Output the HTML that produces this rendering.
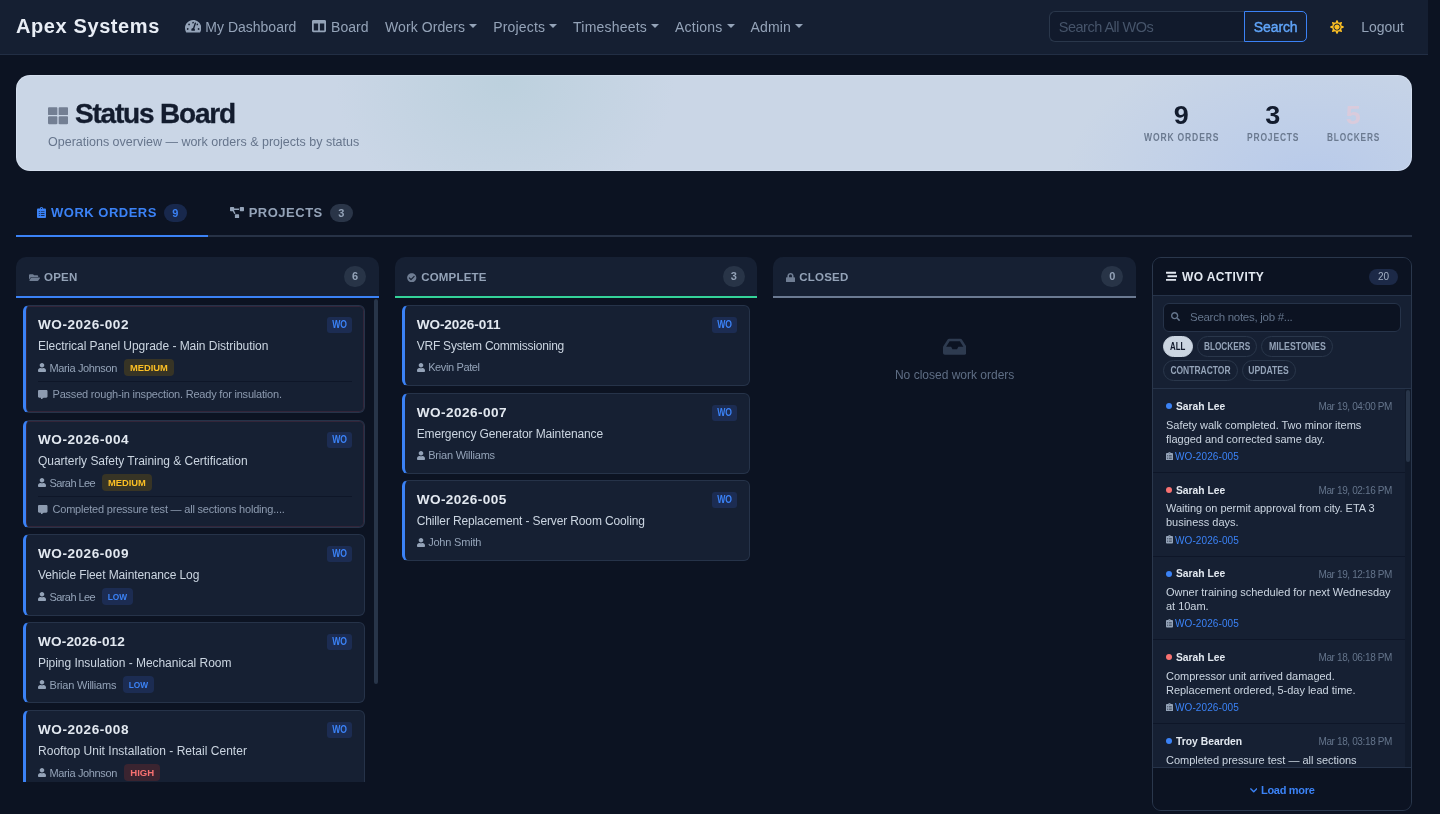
<!DOCTYPE html>
<html lang="en">
<head>
<meta charset="utf-8">
<title>Status Board - Apex Systems</title>
<style>
*{box-sizing:border-box;margin:0;padding:0}
html,body{width:1440px;height:814px;overflow:hidden;background:#0c1322}
body{font-family:"Liberation Sans",sans-serif;color:#cbd5e1;font-size:14px;line-height:1.5;position:relative}
a{color:inherit;text-decoration:none}
svg{display:block;flex:none}
.page{position:absolute;left:0;top:0;width:1428px;height:814px;overflow:hidden;will-change:transform}
/* NAV */
.nav{position:absolute;left:0;top:0;width:1428px;height:55px;background:#151f32;border-bottom:1px solid #222e44;display:flex;align-items:center;padding:0 16px}
.brand{font-weight:700;font-size:20px;letter-spacing:.6px;color:#e8edf5;margin-right:17.1px;line-height:30px;position:relative;top:-1px;white-space:nowrap}
.nl{display:flex;align-items:center;padding:0 8px;height:40px;color:#94a3b8;font-size:14px;white-space:nowrap}
.nl svg{margin-right:4px;margin-top:-2px}
.caret{display:inline-block;margin-left:4px;width:0;height:0;border-top:4px solid #94a3b8;border-left:4px solid transparent;border-right:4px solid transparent;position:relative;top:-1px}
.sp{flex:1}
.sform{display:flex;height:31px;margin-right:16px;margin-top:-1px}
.sin{width:195px;height:31px;background:#111a2c;border:1px solid #2a374b;border-right:0;border-radius:6px 0 0 6px;color:#46546a;font-size:14.5px;line-height:30px;overflow:hidden;white-space:nowrap;padding-left:8.6px;letter-spacing:-.5px}
.sbtn{width:63px;height:31px;border:1px solid #3b82f6;border-radius:0 5px 5px 0;color:#60a5fa;font-size:14px;font-weight:400;-webkit-text-stroke:.4px #60a5fa;line-height:30px;text-align:center;letter-spacing:-.1px}
.sun{padding:0 8px;position:relative;left:-1px;top:-.5px}
/* HERO */
.hero{position:absolute;left:16px;top:75px;width:1396px;height:96px;border-radius:14px;background:
 radial-gradient(ellipse 170px 135px at 35% 6%,rgba(180,205,216,.62),rgba(180,205,216,0) 100%),
 radial-gradient(ellipse 250px 150px at 93% 112%,rgba(184,202,234,1),rgba(184,202,234,0) 100%),
 #cad6e6;overflow:hidden;box-shadow:inset 0 0 0 1px rgba(235,242,252,.35)}
.hico{position:absolute;left:32px;top:30.8px;color:#737f93}
.htitle{position:absolute;left:59px;top:19.8px;font-size:28px;font-weight:700;letter-spacing:-1.2px;color:#131c2e;line-height:38px;white-space:nowrap;-webkit-text-stroke:.35px #131c2e}
.hsub{position:absolute;left:32px;top:58px;font-size:12.5px;color:#66758c;line-height:18px;white-space:nowrap}
.stats{position:absolute;left:0;top:0;height:96px;width:1396px}
.stat{position:absolute;top:0;text-align:center;padding-top:25.2px}
.stat b{display:block;font-size:25px;line-height:30px;font-weight:700;color:#131c2e;transform:scaleX(1.08)}
.stat b.blk{color:#dacbdc}
.stat span{display:block;font-size:10.3px;font-weight:700;letter-spacing:1px;color:#6b7a90;line-height:14px;margin-top:.7px;white-space:nowrap;transform-origin:0 50%;text-align:left}
/* TABS */
.tabs{position:absolute;left:16px;top:189px;width:1396px;height:48px;border-bottom:2px solid #273246;display:flex}
.tab{height:48px;padding:2px 21px 0;display:flex;align-items:center;font-size:13px;font-weight:700;letter-spacing:.5px;color:#94a3b8;border-bottom:2px solid transparent;white-space:nowrap}
.tab.on{color:#3b82f6;border-bottom-color:#3b82f6}
.tab svg{margin-right:5px;margin-top:-1.5px}
.tbadge{margin-left:7px;min-width:23px;height:18px;border-radius:9px;font-size:11px;line-height:18px;text-align:center;letter-spacing:0;background:#2a3548;color:#94a3b8;padding:0 6px}
.tab.on .tbadge{background:#18284c;color:#3b82f6}
/* BOARD */
.col{position:absolute;top:257px;width:362.67px;height:525px;overflow:hidden}
.c1{left:16px}.c2{left:394.67px}.c3{left:773.33px}
.ch{height:41px;background:#162033;border-radius:10px 10px 0 0;border-bottom:2px solid #3b82f6;display:flex;align-items:center;padding:0 12.6px 0 12px;font-size:11.5px;font-weight:700;letter-spacing:.2px;color:#94a3b8}
.c2 .ch{border-bottom-color:#34d399}
.c3 .ch{border-bottom-color:#6b7a92}
.ch svg{margin-right:5px;position:relative;top:1px;left:.5px;color:#6f7d93}.ch span.lb{position:relative;top:1px}
.ch .cnt{margin-left:auto;width:22px;height:21px;border-radius:11px;background:#283447;color:#94a3b8;text-align:center;line-height:21px;font-size:11px;letter-spacing:0}
.list{padding:7px 7px 0 7px}
.card{position:relative;background:#162033;border:1px solid #263349;border-left:3px solid #3b82f6;border-radius:6px;margin-bottom:7px;padding:0 12px;width:342px;height:81px}
.card.n{height:108px}
.c2 .card{width:348px}
.card.blk{box-shadow:inset 0 0 0 1px rgba(248,80,100,.13)}
.wo{font-size:13.6px;font-weight:700;color:#e2e8f0;line-height:20px;padding-top:9px;letter-spacing:.45px;white-space:nowrap}
.wob{position:absolute;right:12px;top:11px;width:25px;height:16px;border-radius:3px;background:#1c2c52;color:#3b82f6;font-size:10px;font-weight:700;line-height:16px;text-align:center}.wob i{display:inline-block;font-style:normal;transform:scaleX(.86)}
.ttl{font-size:12px;color:#cbd5e1;line-height:18px;margin-top:2px;white-space:nowrap}
.meta{display:flex;align-items:center;height:18px;margin-top:3.5px;font-size:11px;color:#94a3b8;white-space:nowrap}
.meta svg{margin-right:3.5px}.meta span.nmx{position:relative;top:1px}.c2 .meta span.nmx{top:0}
.pri{margin-left:7px;height:17px;line-height:17px;border-radius:4px;font-size:9.8px;font-weight:700;text-align:center}.pri i{display:inline-block;font-style:normal}
.pri.med{width:50px;background:#373425;color:#fbbf24}
.pri.low{width:31px;background:#1c2c52;color:#3b82f6}
.pri.high{width:36px;background:#3a2430;color:#f87171}
.note{border-top:1px solid #0e1628;margin-top:4.5px;height:26px;display:flex;align-items:center;font-size:11px;color:#8d9bb0;letter-spacing:-.2px;white-space:nowrap}
.note svg{margin-right:5px}
.sbar{position:absolute;border-radius:2px;background:#283549}
.empty{text-align:center;padding-top:38.3px;color:#5f6e85;font-size:12px}
.empty svg{margin:0 auto 8.4px;color:#2e3b50}
/* ACTIVITY */
.act{position:absolute;left:1152px;top:257px;width:260px;height:554px;border:1px solid #2a374c;border-radius:9px;overflow:hidden;background:#162033}
.ah{height:38px;background:#0c1322;border-bottom:1px solid #263349;display:flex;align-items:center;padding:0 13px 0 13px;font-size:12px;font-weight:700;letter-spacing:.35px;color:#e2e8f0}
.ah svg{margin-right:5px;margin-top:-1px;margin-left:-.4px}
.ah .n20{margin-left:auto;width:29px;height:16px;border-radius:8px;background:#1c2947;color:#a3b0c4;font-size:10px;line-height:16px;text-align:center;letter-spacing:0;font-weight:400}
.af{height:93px;border-bottom:1px solid #263349;padding:7px 10px 0 10px;position:relative}
.srch{height:29px;border:1px solid #263349;border-radius:6px;background:#0c1322;display:flex;align-items:center;padding-left:7px;color:#64748b;font-size:11.5px;letter-spacing:-.28px}
.srch svg{margin-right:10px;margin-top:-1.4px}
.chips{display:flex;flex-wrap:wrap;gap:3px 4px;margin-top:4px}
.chip{height:21px;border:1px solid #2a374b;border-radius:11px;font-size:9px;font-weight:700;line-height:19px;color:#94a3b8;text-align:center;font-size:10px}.chip i{display:inline-block;font-style:normal;position:relative;top:0}
.chip.on{background:#cbd5e1;border-color:#cbd5e1;color:#0f172a}
.feed{position:relative;height:378px;overflow:hidden;background:#111a2b}
.it{background:#162033;height:83.75px;border-bottom:1px solid #0e1628;padding:10.5px 13px 0 13px;width:252px;position:relative}
.ir{display:flex;align-items:center;height:14px}
.dot{width:6px;height:6px;border-radius:3px;background:#3b82f6;margin-right:4px;margin-top:-1px}
.dot.r{background:#f87171}
.nm{font-size:11.5px;font-weight:700;color:#e2e8f0;display:inline-block;transform:scaleX(.895);transform-origin:0 50%;white-space:nowrap}
.tm{margin-left:auto;font-size:10px;color:#64748b;letter-spacing:-.37px}
.tx{font-size:11px;line-height:14.2px;color:#cbd5e1;margin-top:4px;letter-spacing:-.02px;white-space:nowrap}
.lk{display:flex;align-items:center;margin-top:4px;height:13px;font-size:10px;color:#3b82f6;letter-spacing:.1px}
.lk svg{margin-right:2px;color:#94a3b8;margin-top:-1px}
.ft{position:absolute;left:0;bottom:0;width:258px;height:43px;background:#0c1322;border-top:1px solid #263349;display:flex;align-items:center;justify-content:center;padding-top:2px;font-size:11px;font-weight:700;color:#3b82f6;letter-spacing:-.31px}
.ft svg{margin-right:4px}
</style>
</head>
<body>
<div class="page">
<nav class="nav">
  <a class="brand">Apex Systems</a>
  <a class="nl"><svg width="16.3" height="14.5" viewBox="0 0 576 512" fill="currentColor" preserveAspectRatio="none"><path d="M288 32C128.94 32 0 160.94 0 320c0 52.8 14.25 102.26 39.06 144.8 5.61 9.62 16.3 15.2 27.44 15.2h443c11.14 0 21.83-5.58 27.44-15.2C561.75 422.26 576 372.8 576 320c0-159.06-128.94-288-288-288zm0 64c14.71 0 26.58 10.13 30.32 23.65-1.11 2.26-2.64 4.23-3.45 6.67l-9.22 27.67c-5.13 3.49-10.97 6.01-17.64 6.01-17.67 0-32-14.33-32-32S270.33 96 288 96zM96 384c-17.67 0-32-14.33-32-32s14.33-32 32-32 32 14.33 32 32-14.33 32-32 32zm48-160c-17.67 0-32-14.33-32-32s14.33-32 32-32 32 14.33 32 32-14.33 32-32 32zm246.77-72.41l-61.33 184C343.13 347.33 352 364.54 352 384c0 11.72-3.38 22.55-8.88 32H232.88c-5.5-9.45-8.88-20.28-8.88-32 0-33.94 26.5-61.43 59.9-63.59l61.34-184.01c4.17-12.56 17.73-19.45 30.36-15.17 12.57 4.19 19.35 17.79 15.17 30.36zm14.66 57.2l15.52-46.55c3.47-1.29 7.13-2.23 11.05-2.23 17.67 0 32 14.33 32 32s-14.33 32-32 32c-11.38-.01-20.89-6.28-26.57-15.22zM480 384c-17.67 0-32-14.33-32-32s14.33-32 32-32 32 14.33 32 32-14.33 32-32 32z"/></svg>My Dashboard</a>
  <a class="nl" style="padding-left:7.6px"><svg width="14" height="14" viewBox="0 0 512 512" fill="currentColor" preserveAspectRatio="none"><path d="M464 32H48C21.49 32 0 53.49 0 80v352c0 26.51 21.49 48 48 48h416c26.51 0 48-21.49 48-48V80c0-26.51-21.49-48-48-48zM224 416H64V160h160v256zm224 0H288V160h160v256z"/></svg><span style="margin-left:1.1px">Board</span></a>
  <a class="nl" style="letter-spacing:.08px;margin-left:.6px">Work Orders<i class="caret"></i></a>
  <a class="nl" style="letter-spacing:.15px;margin-left:.3px">Projects<i class="caret"></i></a>
  <a class="nl" style="letter-spacing:.21px">Timesheets<i class="caret"></i></a>
  <a class="nl" style="letter-spacing:.23px">Actions<i class="caret"></i></a>
  <a class="nl" style="letter-spacing:.12px">Admin<i class="caret"></i></a>
  <span class="sp"></span>
  <div class="sform"><div class="sin">Search All WOs</div><div class="sbtn">Search</div></div>
  <a class="sun"><svg width="14" height="14" viewBox="0 0 512 512" fill="#fbbf24" preserveAspectRatio="none"><path d="M256 160c-52.900 0-96 43.100-96 96s43.100 96 96 96 96-43.100 96-96-43.100-96-96-96zm246.400 80.500l-94.700-47.300 33.500-100.400c4.500-13.600-8.400-26.500-21.900-21.900l-100.400 33.500-47.400-94.800c-6.400-12.800-24.600-12.800-31 0l-47.300 94.700L92.700 70.800c-13.600-4.500-26.500 8.400-21.900 21.900l33.500 100.400-94.700 47.400c-12.800 6.400-12.800 24.600 0 31l94.700 47.300-33.500 100.500c-4.500 13.600 8.400 26.500 21.900 21.900l100.400-33.500 47.300 94.700c6.400 12.800 24.600 12.800 31 0l47.300-94.700 100.400 33.500c13.600 4.500 26.500-8.400 21.900-21.900l-33.500-100.400 94.700-47.300c13-6.500 13-24.700.2-31.100zm-155.900 106c-49.900 49.900-131.100 49.900-181 0-49.900-49.900-49.900-131.100 0-181 49.900-49.900 131.100-49.900 181 0 49.900 49.900 49.900 131.100 0 181z"/></svg></a>
  <a class="nl">Logout</a>
</nav>

<section class="hero">
  <div class="hico"><svg width="20" height="19.4" viewBox="0 0 512 512" fill="currentColor" preserveAspectRatio="none"><path d="M296 32h192c13.255 0 24 10.745 24 24v160c0 13.255-10.745 24-24 24H296c-13.255 0-24-10.745-24-24V56c0-13.255 10.745-24 24-24zm-80 0H24C10.745 32 0 42.745 0 56v160c0 13.255 10.745 24 24 24h192c13.255 0 24-10.745 24-24V56c0-13.255-10.745-24-24-24zM0 296v160c0 13.255 10.745 24 24 24h192c13.255 0 24-10.745 24-24V296c0-13.255-10.745-24-24-24H24c-13.255 0-24 10.745-24 24zm296 184h192c13.255 0 24-10.745 24-24V296c0-13.255-10.745-24-24-24H296c-13.255 0-24 10.745-24 24v160c0 13.255 10.745 24 24 24z"/></svg></div>
  <h1 class="htitle">Status Board</h1>
  <p class="hsub">Operations overview — work orders &amp; projects by status</p>
  <div class="stats">
    <div class="stat" style="left:1127.7px;width:74.4px"><b>9</b><span style="transform:scaleX(.831)">WORK ORDERS</span></div>
    <div class="stat" style="left:1231px;width:51.5px"><b>3</b><span style="transform:scaleX(.824)">PROJECTS</span></div>
    <div class="stat" style="left:1311px;width:52.3px"><b class="blk">5</b><span style="transform:scaleX(.806)">BLOCKERS</span></div>
  </div>
</section>

<div class="tabs">
  <a class="tab on"><svg width="9" height="11" viewBox="0 0 384 512" fill="currentColor" preserveAspectRatio="none"><path d="M336 64h-80c0-35.3-28.7-64-64-64s-64 28.7-64 64H48C21.5 64 0 85.5 0 112v352c0 26.5 21.5 48 48 48h288c26.5 0 48-21.5 48-48V112c0-26.5-21.5-48-48-48zM96 424c-13.3 0-24-10.7-24-24s10.700-24 24-24 24 10.700 24 24-10.700 24-24 24zm0-96c-13.300 0-24-10.700-24-24s10.700-24 24-24 24 10.700 24 24-10.700 24-24 24zm0-96c-13.300 0-24-10.700-24-24s10.700-24 24-24 24 10.700 24 24-10.700 24-24 24zm96-192c13.300 0 24 10.700 24 24s-10.700 24-24 24-24-10.700-24-24 10.700-24 24-24zm128 368c0 4.400-3.600 8-8 8H168c-4.400 0-8-3.600-8-8v-16c0-4.400 3.600-8 8-8h144c4.400 0 8 3.600 8 8v16zm0-96c0 4.400-3.600 8-8 8H168c-4.400 0-8-3.600-8-8v-16c0-4.400 3.600-8 8-8h144c4.400 0 8 3.600 8 8v16zm0-96c0 4.400-3.600 8-8 8H168c-4.400 0-8-3.600-8-8v-16c0-4.400 3.600-8 8-8h144c4.400 0 8 3.600 8 8v16z"/></svg>WORK ORDERS<span class="tbadge">9</span></a>
  <a class="tab" style="margin-left:.8px"><svg width="14" height="11.5" viewBox="0 0 640 512" fill="currentColor" preserveAspectRatio="none"><path d="M384 320H256c-17.670 0-32 14.330-32 32v128c0 17.670 14.330 32 32 32h128c17.670 0 32-14.330 32-32V352c0-17.670-14.330-32-32-32zM192 32c0-17.670-14.330-32-32-32H32C14.330 0 0 14.330 0 32v128c0 17.670 14.330 32 32 32h95.720l73.160 128.040C211.980 300.980 232.400 288 256 288h.280L192 175.510V128h224V64H192V32zM608 0H480c-17.670 0-32 14.330-32 32v128c0 17.670 14.330 32 32 32h128c17.670 0 32-14.330 32-32V32c0-17.670-14.330-32-32-32z"/></svg>PROJECTS<span class="tbadge">3</span></a>
</div>

<div class="col c1">
  <div class="ch"><svg width="11" height="9" viewBox="0 0 576 512" fill="currentColor" preserveAspectRatio="none"><path d="M572.694 292.093L500.270 416.248A63.997 63.997 0 0 1 444.989 448H45.025c-18.523 0-30.064-20.093-20.731-36.093l72.424-124.155A64 64 0 0 1 152 256h399.964c18.523 0 30.064 20.093 20.730 36.093zM152 224h328v-48c0-26.510-21.490-48-48-48H272l-64-64H48C21.490 64 0 85.490 0 112v278.046l69.077-118.418C86.214 242.250 117.989 224 152 224z"/></svg><span class="lb">OPEN</span><span class="cnt">6</span></div>
  <div class="list">
    <div class="card n blk"><div class="wo" style="letter-spacing:0.51px">WO-2026-002</div><span class="wob"><i>WO</i></span><div class="ttl" style="letter-spacing:-0.04px">Electrical Panel Upgrade - Main Distribution</div><div class="meta"><svg width="8" height="9" viewBox="0 0 448 512" fill="currentColor" preserveAspectRatio="none"><path d="M224 256c70.700 0 128-57.300 128-128S294.700 0 224 0 96 57.300 96 128s57.300 128 128 128zm89.600 32h-16.700c-22.200 10.200-46.900 16-72.900 16s-50.600-5.800-72.900-16h-16.700C60.200 288 0 348.200 0 422.400V464c0 26.500 21.500 48 48 48h352c26.500 0 48-21.500 48-48v-41.600c0-74.200-60.200-134.400-134.400-134.400z"/></svg><span class="nmx" style="letter-spacing:-0.36px">Maria Johnson</span><span class="pri med"><i style="transform:scaleX(.955)">MEDIUM</i></span></div><div class="note"><svg width="9.5" height="9.5" viewBox="0 0 512 512" fill="currentColor" preserveAspectRatio="none"><path d="M448 0H64C28.700 0 0 28.700 0 64v288c0 35.300 28.700 64 64 64h96v84c0 9.800 11.200 15.500 19.100 9.700L304 416h144c35.300 0 64-28.700 64-64V64c0-35.300-28.700-64-64-64z"/></svg>Passed rough-in inspection. Ready for insulation.</div></div>
    <div class="card n blk" style="margin-bottom:6px"><div class="wo" style="letter-spacing:0.53px">WO-2026-004</div><span class="wob"><i>WO</i></span><div class="ttl" style="letter-spacing:-0.03px">Quarterly Safety Training &amp; Certification</div><div class="meta"><svg width="8" height="9" viewBox="0 0 448 512" fill="currentColor" preserveAspectRatio="none"><path d="M224 256c70.700 0 128-57.300 128-128S294.700 0 224 0 96 57.300 96 128s57.300 128 128 128zm89.600 32h-16.700c-22.200 10.200-46.900 16-72.900 16s-50.600-5.800-72.900-16h-16.700C60.200 288 0 348.200 0 422.400V464c0 26.500 21.500 48 48 48h352c26.500 0 48-21.500 48-48v-41.600c0-74.200-60.200-134.400-134.400-134.400z"/></svg><span class="nmx" style="letter-spacing:-0.585px">Sarah Lee</span><span class="pri med"><i style="transform:scaleX(.955)">MEDIUM</i></span></div><div class="note"><svg width="9.5" height="9.5" viewBox="0 0 512 512" fill="currentColor" preserveAspectRatio="none"><path d="M448 0H64C28.700 0 0 28.700 0 64v288c0 35.300 28.700 64 64 64h96v84c0 9.800 11.200 15.500 19.100 9.700L304 416h144c35.300 0 64-28.700 64-64V64c0-35.300-28.700-64-64-64z"/></svg>Completed pressure test — all sections holding....</div></div>
    <div class="card" style="height:82px;margin-bottom:6px"><div class="wo" style="letter-spacing:0.51px">WO-2026-009</div><span class="wob"><i>WO</i></span><div class="ttl" style="letter-spacing:-0.1px">Vehicle Fleet Maintenance Log</div><div class="meta"><svg width="8" height="9" viewBox="0 0 448 512" fill="currentColor" preserveAspectRatio="none"><path d="M224 256c70.700 0 128-57.300 128-128S294.700 0 224 0 96 57.300 96 128s57.300 128 128 128zm89.600 32h-16.700c-22.200 10.200-46.900 16-72.900 16s-50.600-5.800-72.900-16h-16.700C60.200 288 0 348.200 0 422.400V464c0 26.500 21.500 48 48 48h352c26.500 0 48-21.500 48-48v-41.600c0-74.200-60.200-134.400-134.400-134.400z"/></svg><span class="nmx" style="letter-spacing:-0.585px">Sarah Lee</span><span class="pri low"><i style="transform:scaleX(.85)">LOW</i></span></div></div>
    <div class="card"><div class="wo" style="letter-spacing:0.15px">WO-2026-012</div><span class="wob"><i>WO</i></span><div class="ttl" style="letter-spacing:-0.04px">Piping Insulation - Mechanical Room</div><div class="meta"><svg width="8" height="9" viewBox="0 0 448 512" fill="currentColor" preserveAspectRatio="none"><path d="M224 256c70.700 0 128-57.300 128-128S294.700 0 224 0 96 57.300 96 128s57.300 128 128 128zm89.600 32h-16.700c-22.200 10.200-46.900 16-72.900 16s-50.600-5.800-72.900-16h-16.700C60.200 288 0 348.200 0 422.400V464c0 26.500 21.500 48 48 48h352c26.500 0 48-21.500 48-48v-41.600c0-74.200-60.200-134.400-134.400-134.400z"/></svg><span class="nmx" style="letter-spacing:-0.21px">Brian Williams</span><span class="pri low"><i style="transform:scaleX(.85)">LOW</i></span></div></div>
    <div class="card"><div class="wo" style="letter-spacing:0.51px">WO-2026-008</div><span class="wob"><i>WO</i></span><div class="ttl" style="letter-spacing:0.02px">Rooftop Unit Installation - Retail Center</div><div class="meta"><svg width="8" height="9" viewBox="0 0 448 512" fill="currentColor" preserveAspectRatio="none"><path d="M224 256c70.700 0 128-57.300 128-128S294.700 0 224 0 96 57.300 96 128s57.300 128 128 128zm89.600 32h-16.700c-22.200 10.200-46.900 16-72.900 16s-50.600-5.800-72.900-16h-16.700C60.200 288 0 348.200 0 422.400V464c0 26.500 21.500 48 48 48h352c26.500 0 48-21.500 48-48v-41.600c0-74.200-60.200-134.400-134.400-134.400z"/></svg><span class="nmx" style="letter-spacing:-0.36px">Maria Johnson</span><span class="pri high"><i style="transform:scaleX(.98)">HIGH</i></span></div></div>
  </div>
  <div class="sbar" style="left:358.4px;top:42.3px;width:3.3px;height:385px"></div>
</div>

<div class="col c2">
  <div class="ch"><svg width="9.5" height="9.5" viewBox="0 0 512 512" fill="currentColor" preserveAspectRatio="none"><path d="M504 256c0 136.967-111.033 248-248 248S8 392.967 8 256 119.033 8 256 8s248 111.033 248 248zM227.314 387.314l184-184c6.248-6.248 6.248-16.379 0-22.627l-22.627-22.627c-6.248-6.249-16.379-6.249-22.628 0L216 308.118l-70.059-70.059c-6.248-6.248-16.379-6.248-22.628 0l-22.627 22.627c-6.248 6.248-6.248 16.379 0 22.627l104 104c6.249 6.249 16.379 6.249 22.628.001z"/></svg><span class="lb">COMPLETE</span><span class="cnt">3</span></div>
  <div class="list">
    <div class="card"><div class="wo" style="letter-spacing:-0.08px">WO-2026-011</div><span class="wob"><i>WO</i></span><div class="ttl" style="letter-spacing:-0.22px">VRF System Commissioning</div><div class="meta"><svg width="8" height="9" viewBox="0 0 448 512" fill="currentColor" preserveAspectRatio="none"><path d="M224 256c70.700 0 128-57.300 128-128S294.700 0 224 0 96 57.300 96 128s57.300 128 128 128zm89.600 32h-16.700c-22.200 10.200-46.900 16-72.900 16s-50.600-5.800-72.900-16h-16.700C60.200 288 0 348.200 0 422.400V464c0 26.500 21.500 48 48 48h352c26.500 0 48-21.500 48-48v-41.600c0-74.200-60.200-134.400-134.400-134.400z"/></svg><span class="nmx" style="letter-spacing:-0.38px">Kevin Patel</span></div></div>
    <div class="card" style="margin-bottom:6px"><div class="wo" style="letter-spacing:0.46px">WO-2026-007</div><span class="wob"><i>WO</i></span><div class="ttl" style="letter-spacing:-0.12px">Emergency Generator Maintenance</div><div class="meta"><svg width="8" height="9" viewBox="0 0 448 512" fill="currentColor" preserveAspectRatio="none"><path d="M224 256c70.700 0 128-57.300 128-128S294.700 0 224 0 96 57.300 96 128s57.300 128 128 128zm89.600 32h-16.700c-22.200 10.200-46.900 16-72.900 16s-50.600-5.800-72.900-16h-16.700C60.200 288 0 348.200 0 422.400V464c0 26.500 21.500 48 48 48h352c26.500 0 48-21.500 48-48v-41.600c0-74.200-60.200-134.400-134.400-134.400z"/></svg><span class="nmx" style="letter-spacing:-0.21px">Brian Williams</span></div></div>
    <div class="card"><div class="wo" style="letter-spacing:0.42px">WO-2026-005</div><span class="wob"><i>WO</i></span><div class="ttl" style="letter-spacing:-0.13px">Chiller Replacement - Server Room Cooling</div><div class="meta"><svg width="8" height="9" viewBox="0 0 448 512" fill="currentColor" preserveAspectRatio="none"><path d="M224 256c70.700 0 128-57.300 128-128S294.700 0 224 0 96 57.300 96 128s57.300 128 128 128zm89.600 32h-16.700c-22.200 10.200-46.900 16-72.900 16s-50.600-5.800-72.900-16h-16.700C60.200 288 0 348.200 0 422.400V464c0 26.500 21.500 48 48 48h352c26.500 0 48-21.500 48-48v-41.600c0-74.200-60.200-134.400-134.400-134.400z"/></svg><span class="nmx" style="letter-spacing:-0.2px">John Smith</span></div></div>
  </div>
</div>

<div class="col c3">
  <div class="ch"><svg width="9" height="9.5" viewBox="0 0 448 512" fill="currentColor" preserveAspectRatio="none"><path d="M400 224h-24v-72C376 68.200 307.800 0 224 0S72 68.200 72 152v72H48c-26.500 0-48 21.500-48 48v192c0 26.500 21.500 48 48 48h352c26.500 0 48-21.500 48-48V272c0-26.500-21.500-48-48-48zm-104 0H152v-72c0-39.700 32.300-72 72-72s72 32.300 72 72v72z"/></svg><span class="lb">CLOSED</span><span class="cnt">0</span></div>
  <div class="empty"><svg width="23.5" height="21.3" viewBox="0 0 576 512" fill="currentColor" preserveAspectRatio="none"><path d="M567.938 243.908L462.250 85.374A48.003 48.003 0 0 0 422.311 64H153.689a48 48 0 0 0-39.938 21.374L8.062 243.908A47.994 47.994 0 0 0 0 270.533V400c0 26.510 21.490 48 48 48h480c26.510 0 48-21.490 48-48V270.533a47.994 47.994 0 0 0-8.062-26.625zM162.252 128h251.497l85.333 128H376l-32 64H232l-32-64H76.918l85.334-128z"/></svg>No closed work orders</div>
</div>

<aside class="act">
  <div class="ah"><svg width="11.5" height="10.5" viewBox="0 0 512 512" fill="currentColor" preserveAspectRatio="none"><path d="M16 128h416c8.840 0 16-7.160 16-16V48c0-8.840-7.160-16-16-16H16C7.160 32 0 39.160 0 48v64c0 8.840 7.160 16 16 16zm480 80H80c-8.840 0-16 7.160-16 16v64c0 8.840 7.160 16 16 16h416c8.840 0 16-7.160 16-16v-64c0-8.840-7.160-16-16-16zm-64 176H16c-8.840 0-16 7.160-16 16v64c0 8.840 7.160 16 16 16h416c8.840 0 16-7.160 16-16v-64c0-8.840-7.160-16-16-16z"/></svg>WO ACTIVITY<span class="n20">20</span></div>
  <div class="af">
    <div class="srch"><svg width="9" height="9" viewBox="0 0 512 512" fill="currentColor" preserveAspectRatio="none"><path d="M505 442.700L405.300 343c-4.500-4.500-10.600-7-17-7H372c27.600-35.300 44-79.700 44-128C416 93.100 322.900 0 208 0S0 93.100 0 208s93.100 208 208 208c48.300 0 92.700-16.400 128-44v16.300c0 6.400 2.500 12.500 7 17l99.700 99.700c9.400 9.400 24.600 9.400 33.900 0l28.300-28.300c9.400-9.400 9.400-24.600.1-34zM208 336c-70.700 0-128-57.200-128-128 0-70.700 57.200-128 128-128 70.700 0 128 57.200 128 128 0 70.700-57.200 128-128 128z"/></svg>Search notes, job #...</div>
    <div class="chips"><span class="chip on" style="width:30px"><i style="transform:scaleX(0.79)">ALL</i></span><span class="chip" style="width:60.4px"><i style="transform:scaleX(0.823)">BLOCKERS</i></span><span class="chip" style="width:71.2px"><i style="transform:scaleX(0.875)">MILESTONES</i></span><span class="chip" style="width:74.5px"><i style="transform:scaleX(0.848)">CONTRACTOR</i></span><span class="chip" style="width:54.6px"><i style="transform:scaleX(0.857)">UPDATES</i></span></div>
  </div>
  <div class="feed">
    <div class="it"><div class="ir"><i class="dot"></i><span class="nm">Sarah Lee</span><span class="tm">Mar 19, 04:00 PM</span></div><div class="tx">Safety walk completed. Two minor items<br>flagged and corrected same day.</div><a class="lk"><svg width="7" height="8.5" viewBox="0 0 384 512" fill="currentColor" preserveAspectRatio="none"><path d="M336 64h-80c0-35.3-28.7-64-64-64s-64 28.7-64 64H48C21.5 64 0 85.5 0 112v352c0 26.5 21.5 48 48 48h288c26.5 0 48-21.5 48-48V112c0-26.5-21.5-48-48-48zM96 424c-13.3 0-24-10.7-24-24s10.700-24 24-24 24 10.700 24 24-10.700 24-24 24zm0-96c-13.300 0-24-10.700-24-24s10.700-24 24-24 24 10.700 24 24-10.700 24-24 24zm0-96c-13.300 0-24-10.700-24-24s10.700-24 24-24 24 10.700 24 24-10.700 24-24 24zm96-192c13.300 0 24 10.700 24 24s-10.700 24-24 24-24-10.700-24-24 10.700-24 24-24zm128 368c0 4.400-3.600 8-8 8H168c-4.400 0-8-3.600-8-8v-16c0-4.400 3.600-8 8-8h144c4.400 0 8 3.600 8 8v16zm0-96c0 4.400-3.600 8-8 8H168c-4.400 0-8-3.600-8-8v-16c0-4.400 3.600-8 8-8h144c4.400 0 8 3.600 8 8v16zm0-96c0 4.400-3.600 8-8 8H168c-4.400 0-8-3.600-8-8v-16c0-4.400 3.600-8 8-8h144c4.400 0 8 3.600 8 8v16z"/></svg>WO-2026-005</a></div>
    <div class="it"><div class="ir"><i class="dot r"></i><span class="nm">Sarah Lee</span><span class="tm">Mar 19, 02:16 PM</span></div><div class="tx">Waiting on permit approval from city. ETA 3<br>business days.</div><a class="lk"><svg width="7" height="8.5" viewBox="0 0 384 512" fill="currentColor" preserveAspectRatio="none"><path d="M336 64h-80c0-35.3-28.7-64-64-64s-64 28.7-64 64H48C21.5 64 0 85.5 0 112v352c0 26.5 21.5 48 48 48h288c26.5 0 48-21.5 48-48V112c0-26.5-21.5-48-48-48zM96 424c-13.3 0-24-10.7-24-24s10.700-24 24-24 24 10.700 24 24-10.700 24-24 24zm0-96c-13.300 0-24-10.700-24-24s10.700-24 24-24 24 10.700 24 24-10.700 24-24 24zm0-96c-13.300 0-24-10.700-24-24s10.700-24 24-24 24 10.700 24 24-10.700 24-24 24zm96-192c13.300 0 24 10.700 24 24s-10.700 24-24 24-24-10.700-24-24 10.700-24 24-24zm128 368c0 4.400-3.600 8-8 8H168c-4.400 0-8-3.600-8-8v-16c0-4.400 3.600-8 8-8h144c4.400 0 8 3.600 8 8v16zm0-96c0 4.400-3.600 8-8 8H168c-4.400 0-8-3.600-8-8v-16c0-4.400 3.600-8 8-8h144c4.400 0 8 3.600 8 8v16zm0-96c0 4.400-3.600 8-8 8H168c-4.400 0-8-3.600-8-8v-16c0-4.400 3.600-8 8-8h144c4.400 0 8 3.600 8 8v16z"/></svg>WO-2026-005</a></div>
    <div class="it"><div class="ir"><i class="dot"></i><span class="nm">Sarah Lee</span><span class="tm">Mar 19, 12:18 PM</span></div><div class="tx">Owner training scheduled for next Wednesday<br>at 10am.</div><a class="lk"><svg width="7" height="8.5" viewBox="0 0 384 512" fill="currentColor" preserveAspectRatio="none"><path d="M336 64h-80c0-35.3-28.7-64-64-64s-64 28.7-64 64H48C21.5 64 0 85.5 0 112v352c0 26.5 21.5 48 48 48h288c26.5 0 48-21.5 48-48V112c0-26.5-21.5-48-48-48zM96 424c-13.3 0-24-10.7-24-24s10.700-24 24-24 24 10.700 24 24-10.700 24-24 24zm0-96c-13.300 0-24-10.700-24-24s10.700-24 24-24 24 10.700 24 24-10.700 24-24 24zm0-96c-13.300 0-24-10.700-24-24s10.700-24 24-24 24 10.700 24 24-10.700 24-24 24zm96-192c13.300 0 24 10.700 24 24s-10.700 24-24 24-24-10.700-24-24 10.700-24 24-24zm128 368c0 4.400-3.600 8-8 8H168c-4.400 0-8-3.600-8-8v-16c0-4.400 3.600-8 8-8h144c4.400 0 8 3.600 8 8v16zm0-96c0 4.400-3.600 8-8 8H168c-4.400 0-8-3.600-8-8v-16c0-4.400 3.600-8 8-8h144c4.400 0 8 3.600 8 8v16zm0-96c0 4.400-3.600 8-8 8H168c-4.400 0-8-3.600-8-8v-16c0-4.400 3.600-8 8-8h144c4.400 0 8 3.600 8 8v16z"/></svg>WO-2026-005</a></div>
    <div class="it"><div class="ir"><i class="dot r"></i><span class="nm">Sarah Lee</span><span class="tm">Mar 18, 06:18 PM</span></div><div class="tx">Compressor unit arrived damaged.<br>Replacement ordered, 5-day lead time.</div><a class="lk"><svg width="7" height="8.5" viewBox="0 0 384 512" fill="currentColor" preserveAspectRatio="none"><path d="M336 64h-80c0-35.3-28.7-64-64-64s-64 28.7-64 64H48C21.5 64 0 85.5 0 112v352c0 26.5 21.5 48 48 48h288c26.5 0 48-21.5 48-48V112c0-26.5-21.5-48-48-48zM96 424c-13.3 0-24-10.7-24-24s10.700-24 24-24 24 10.700 24 24-10.700 24-24 24zm0-96c-13.300 0-24-10.700-24-24s10.700-24 24-24 24 10.700 24 24-10.700 24-24 24zm0-96c-13.300 0-24-10.700-24-24s10.700-24 24-24 24 10.700 24 24-10.700 24-24 24zm96-192c13.300 0 24 10.700 24 24s-10.700 24-24 24-24-10.700-24-24 10.700-24 24-24zm128 368c0 4.400-3.600 8-8 8H168c-4.400 0-8-3.600-8-8v-16c0-4.400 3.600-8 8-8h144c4.400 0 8 3.600 8 8v16zm0-96c0 4.400-3.600 8-8 8H168c-4.400 0-8-3.600-8-8v-16c0-4.400 3.600-8 8-8h144c4.400 0 8 3.600 8 8v16zm0-96c0 4.400-3.600 8-8 8H168c-4.400 0-8-3.600-8-8v-16c0-4.400 3.600-8 8-8h144c4.400 0 8 3.600 8 8v16z"/></svg>WO-2026-005</a></div>
    <div class="it"><div class="ir"><i class="dot"></i><span class="nm" style="transform:scaleX(.9)">Troy Bearden</span><span class="tm">Mar 18, 03:18 PM</span></div><div class="tx">Completed pressure test — all sections<br>holding. Moving to final inspection.</div><a class="lk"><svg width="7" height="8.5" viewBox="0 0 384 512" fill="currentColor" preserveAspectRatio="none"><path d="M336 64h-80c0-35.3-28.7-64-64-64s-64 28.7-64 64H48C21.5 64 0 85.5 0 112v352c0 26.5 21.5 48 48 48h288c26.5 0 48-21.5 48-48V112c0-26.5-21.5-48-48-48zM96 424c-13.3 0-24-10.7-24-24s10.700-24 24-24 24 10.700 24 24-10.700 24-24 24zm0-96c-13.300 0-24-10.700-24-24s10.700-24 24-24 24 10.700 24 24-10.700 24-24 24zm0-96c-13.300 0-24-10.700-24-24s10.700-24 24-24 24 10.700 24 24-10.700 24-24 24zm96-192c13.300 0 24 10.700 24 24s-10.700 24-24 24-24-10.700-24-24 10.700-24 24-24zm128 368c0 4.400-3.600 8-8 8H168c-4.400 0-8-3.600-8-8v-16c0-4.400 3.600-8 8-8h144c4.400 0 8 3.600 8 8v16zm0-96c0 4.400-3.600 8-8 8H168c-4.400 0-8-3.600-8-8v-16c0-4.400 3.600-8 8-8h144c4.400 0 8 3.600 8 8v16zm0-96c0 4.400-3.600 8-8 8H168c-4.400 0-8-3.600-8-8v-16c0-4.400 3.600-8 8-8h144c4.400 0 8 3.600 8 8v16z"/></svg>WO-2026-004</a></div>
    <div class="sbar" style="left:253.1px;top:1.4px;width:3.6px;height:71.3px"></div>
  </div>
  <div class="ft"><svg width="7.5" height="8.6" viewBox="0 0 448 512" fill="currentColor" preserveAspectRatio="none"><path d="M207.029 381.476L12.686 187.132c-9.373-9.373-9.373-24.569 0-33.941l22.667-22.667c9.357-9.357 24.522-9.375 33.901-.04L224 284.505l154.745-154.021c9.379-9.335 24.544-9.317 33.901.04l22.667 22.667c9.373 9.373 9.373 24.569 0 33.941L240.971 381.476c-9.373 9.372-24.569 9.372-33.942 0z"/></svg>Load more</div>
</aside>
</div>
</body>
</html>
